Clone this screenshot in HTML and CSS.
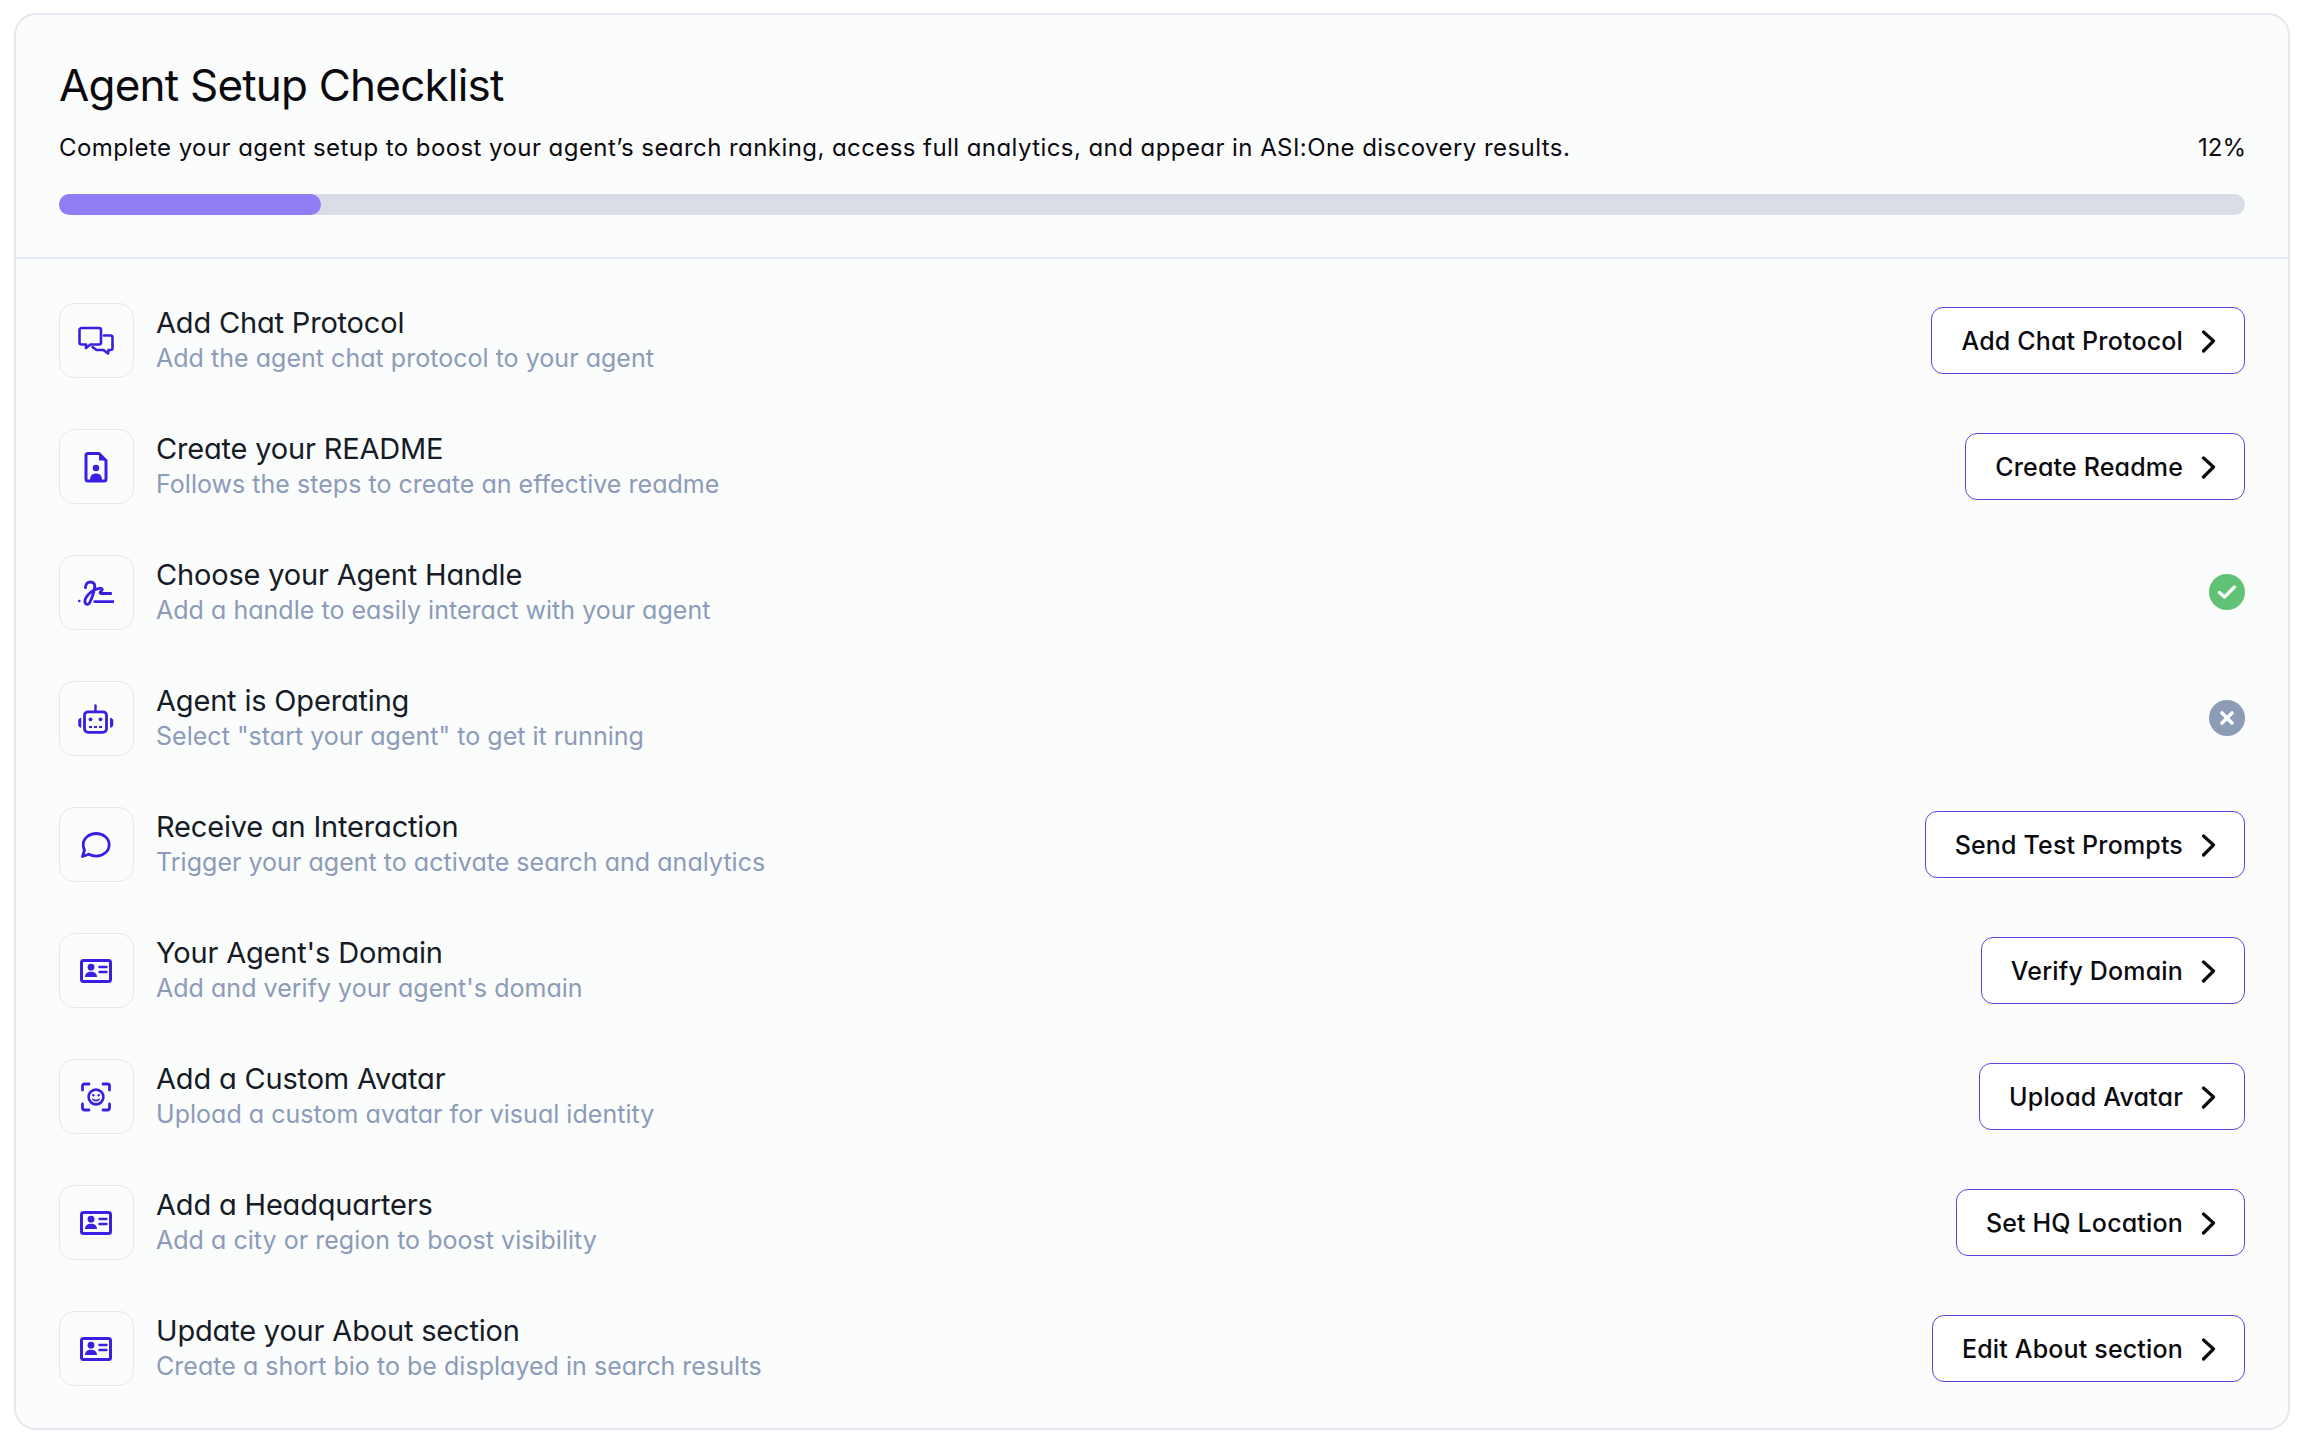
FILE: index.html
```html
<!DOCTYPE html>
<html lang="en">
<head>
<meta charset="utf-8">
<title>Agent Setup Checklist</title>
<link rel="stylesheet" href="styles.css">
</head>
<body>
<svg class="defs" width="0" height="0" aria-hidden="true">
  <defs>
    <symbol id="chev" viewBox="0 0 16 24"><path d="M2.5 3 L12.5 12 L2.5 22" fill="none" stroke="currentColor" stroke-width="3.2" stroke-linecap="round" stroke-linejoin="round"/></symbol>
    <symbol id="idcard" viewBox="0 0 36 36"><rect x="3.5" y="7.5" width="29" height="21" rx="2" fill="none" stroke="currentColor" stroke-width="3"/><circle cx="13" cy="14.2" r="3.4" fill="currentColor"/><path d="M7 24c0-3.5 2.6-5.2 6-5.2s6 1.7 6 5.2z" fill="currentColor"/><path d="M21.5 14h7M21.5 19h7" stroke="currentColor" stroke-width="2.4" stroke-linecap="round"/></symbol>
  </defs>
</svg>
<main class="card">
  <header class="head">
    <h1 class="title">Agent Setup Checklist</h1>
    <div class="subline"><p class="lead">Complete your agent setup to boost your agent’s search ranking, access full analytics, and appear in ASI:One discovery results.</p><span class="pct">12%</span></div>
    <div class="track"><div class="fill" style="width:12%"></div></div>
  </header>
  <ul class="list">
    <li class="row">
      <span class="tile"><svg viewBox="0 0 36 36"><path d="M1.5 7a2 2 0 0 1 2-2h17.500a2 2 0 0 1 2 2v12.500a2 2 0 0 1-2 2h-8.500l-4.500 3.500v-3.500h-4.500a2 2 0 0 1-2-2z" fill="none" stroke="currentColor" stroke-width="2.6" stroke-linejoin="round"/><path d="M26 12.500h6.500a2 2 0 0 1 2 2v10.500a2 2 0 0 1-2 2h-2l-.5 3.500-4.500-3.500h-7l-4-3" fill="none" stroke="currentColor" stroke-width="2.600" stroke-linejoin="round" stroke-linecap="round"/></svg></span>
      <div class="copy"><h2 class="name">Add Chat Protocol</h2><p class="desc">Add the agent chat protocol to your agent</p></div>
      <a class="btn">Add Chat Protocol<svg class="chev"><use href="#chev"/></svg></a>
    </li>
    <li class="row">
      <span class="tile"><svg viewBox="0 0 36 36"><path d="M10 4.500h11l7 7v18.500a2 2 0 0 1-2 2H10a2 2 0 0 1-2-2v-23.500a2 2 0 0 1 2-2z" fill="none" stroke="currentColor" stroke-width="3" stroke-linejoin="round"/><path d="M21 4.500v7h7z" fill="currentColor"/><circle cx="18" cy="19" r="3.300" fill="currentColor"/><path d="M12 31c0-4.500 2.500-6.500 6-6.500s6 2 6 6.500z" fill="currentColor"/></svg></span>
      <div class="copy"><h2 class="name">Create your README</h2><p class="desc">Follows the steps to create an effective readme</p></div>
      <a class="btn">Create Readme<svg class="chev"><use href="#chev"/></svg></a>
    </li>
    <li class="row">
      <span class="tile"><svg viewBox="0 0 36 36"><circle cx="1.300" cy="26" r="1.300" fill="currentColor"/><path d="M7.300 12.700c.5-3.700 2.300-5.700 4.900-5.700 3 0 4.800 1.500 4.500 4.500-.4 4.500-2.700 11.500-5 16.200-1 2-3.400 2.400-4.400.5-1-2 .5-5.800 2.700-8.400 3.500-4 8-6 11.500-6.500 3-.4 3.500 1.200 1.500 3-1.300 1.200-1.300 2.200.5 2.200h9.300M16.700 26.700h19" fill="none" stroke="currentColor" stroke-width="2.800" stroke-linecap="round" stroke-linejoin="round"/></svg></span>
      <div class="copy"><h2 class="name">Choose your Agent Handle</h2><p class="desc">Add a handle to easily interact with your agent</p></div>
      <span class="status ok"><svg viewBox="0 0 36 36"><path d="M10.500 18.500l5 4.500 10-10" fill="none" stroke="#fff" stroke-width="3.400" stroke-linecap="round" stroke-linejoin="round"/></svg></span>
    </li>
    <li class="row">
      <span class="tile"><svg viewBox="0 0 36 36"><path d="M17.500 4.500v6" stroke="currentColor" stroke-width="2.400" stroke-linecap="round"/><rect x="6.500" y="10.800" width="22" height="20.500" rx="3.500" fill="none" stroke="currentColor" stroke-width="2.800"/><circle cx="12.500" cy="18.300" r="1.900" fill="currentColor"/><circle cx="22.500" cy="18.300" r="1.900" fill="currentColor"/><path d="M11 26h3M16 26h3M21 26h3" stroke="currentColor" stroke-width="1.800"/><path d="M2.500 17.500v8.500l-1.500-1.500v-5.500zM32.800 17.500v8.500l1.700-1.500v-5.500z" fill="currentColor" stroke="currentColor" stroke-width="1.500" stroke-linejoin="round"/></svg></span>
      <div class="copy"><h2 class="name">Agent is Operating</h2><p class="desc">Select "start your agent" to get it running</p></div>
      <span class="status off"><svg viewBox="0 0 36 36"><path d="M13 13l10 10M23 13l-10 10" fill="none" stroke="#fff" stroke-width="3.600" stroke-linecap="round"/></svg></span>
    </li>
    <li class="row">
      <span class="tile"><svg viewBox="0 0 36 36"><path d="M18.200 6.500c7.200 0 13 5 13 11.300s-5.800 11.300-13 11.300c-2.700 0-5.200-.7-7.300-1.900L4.500 29.500l2-6.500c-.8-1.600-1.300-3.300-1.300-5.200 0-6.300 5.800-11.300 13-11.300z" fill="none" stroke="currentColor" stroke-width="2.800" stroke-linejoin="round"/></svg></span>
      <div class="copy"><h2 class="name">Receive an Interaction</h2><p class="desc">Trigger your agent to activate search and analytics</p></div>
      <a class="btn">Send Test Prompts<svg class="chev"><use href="#chev"/></svg></a>
    </li>
    <li class="row">
      <span class="tile"><svg viewBox="0 0 36 36"><use href="#idcard"/></svg></span>
      <div class="copy"><h2 class="name">Your Agent's Domain</h2><p class="desc">Add and verify your agent's domain</p></div>
      <a class="btn">Verify Domain<svg class="chev"><use href="#chev"/></svg></a>
    </li>
    <li class="row">
      <span class="tile"><svg viewBox="0 0 36 36"><path d="M11 5H6.500a2 2 0 0 0-2 2v4M25 5h4.500a2 2 0 0 1 2 2v4M11 31H6.500a2 2 0 0 1-2-2v-4M25 31h4.500a2 2 0 0 0 2-2v-4" fill="none" stroke="currentColor" stroke-width="2.800" stroke-linecap="round"/><circle cx="18" cy="18" r="7.400" fill="none" stroke="currentColor" stroke-width="2.600"/><circle cx="15.300" cy="16.300" r="1.200" fill="currentColor"/><circle cx="20.700" cy="16.300" r="1.200" fill="currentColor"/><path d="M14.800 20.300c1.700 1.700 4.700 1.700 6.400 0" fill="none" stroke="currentColor" stroke-width="1.600" stroke-linecap="round"/></svg></span>
      <div class="copy"><h2 class="name">Add a Custom Avatar</h2><p class="desc">Upload a custom avatar for visual identity</p></div>
      <a class="btn">Upload Avatar<svg class="chev"><use href="#chev"/></svg></a>
    </li>
    <li class="row">
      <span class="tile"><svg viewBox="0 0 36 36"><use href="#idcard"/></svg></span>
      <div class="copy"><h2 class="name">Add a Headquarters</h2><p class="desc">Add a city or region to boost visibility</p></div>
      <a class="btn">Set HQ Location<svg class="chev"><use href="#chev"/></svg></a>
    </li>
    <li class="row">
      <span class="tile"><svg viewBox="0 0 36 36"><use href="#idcard"/></svg></span>
      <div class="copy"><h2 class="name">Update your About section</h2><p class="desc">Create a short bio to be displayed in search results</p></div>
      <a class="btn">Edit About section<svg class="chev"><use href="#chev"/></svg></a>
    </li>
  </ul>
</main>
</body>
</html>
```
FILE: styles.css
```css
* { box-sizing: border-box; }
html, body { margin: 0; padding: 0; background: #fff; }
body {
  padding: 13px 18px 0 14px;
  font-family: Inter, "Liberation Sans", sans-serif;
  font-feature-settings: "cv11" 1;
  color: #0b0b0f;
}
.defs { position: absolute; }
.card {
  height: 1417px;
  background: #fbfcfc;
  border: 2px solid #e4e7ef;
  border-radius: 22px;
}
.head {
  height: 244px;
  padding: 42px 43px 0;
  border-bottom: 2px solid #e4e7ef;
}
.title { margin: 0; font-size: 44px; line-height: 56px; font-weight: 400; letter-spacing: -0.8px; }
.subline { display: flex; justify-content: space-between; align-items: center; margin-top: 17px; height: 34px; }
.lead { margin: 0; font-size: 24px; font-weight: 400; letter-spacing: 0.43px; }
.pct { font-size: 24px; margin-right: -1px; }
.track { height: 21px; margin-top: 30px; border-radius: 11px; background: #d9dde6; }
.fill { height: 100%; border-radius: 11px; background: #917df3; }
.list { list-style: none; margin: 0; padding: 44px 43px 0; display: flex; flex-direction: column; gap: 51px; }
.row { display: flex; align-items: center; height: 75px; }
.tile {
  flex: none; width: 75px; height: 75px; padding-right: 1px; display: flex; align-items: center; justify-content: center;
  background: #fbfcfc; border: 1.500px solid #e7e8ea; border-radius: 15px; color: #3b1fe0;
}
.tile svg { width: 36px; height: 36px; display: block; }
.copy { flex: 1; margin: 0 0 1px 22px; min-width: 0; }
.name { margin: 0; font-size: 29px; line-height: 35px; font-weight: 400; color: #161b26; letter-spacing: -0.18px; }
.desc { margin: 1px 0 0; font-size: 25px; line-height: 34px; color: #8c9bb8; font-weight: 400; letter-spacing: 0.03px; }
.btn {
  flex: none; display: flex; align-items: center; height: 67px; padding: 0 27px 0 29px; gap: 18px;
  background: #fff; border: 1.500px solid #5a45e3; border-radius: 12px;
  font-size: 25px; font-weight: 500; color: #0b0b0f; letter-spacing: 0.17px;
}
.chev { width: 16px; height: 24px; display: block; }
.status { width: 36px; height: 36px; margin-bottom: 1px; border-radius: 50%; display: block; }
.status svg { width: 36px; height: 36px; display: block; }
.ok { background: #5fc274; }
.off { background: #8d9cb6; }
```
